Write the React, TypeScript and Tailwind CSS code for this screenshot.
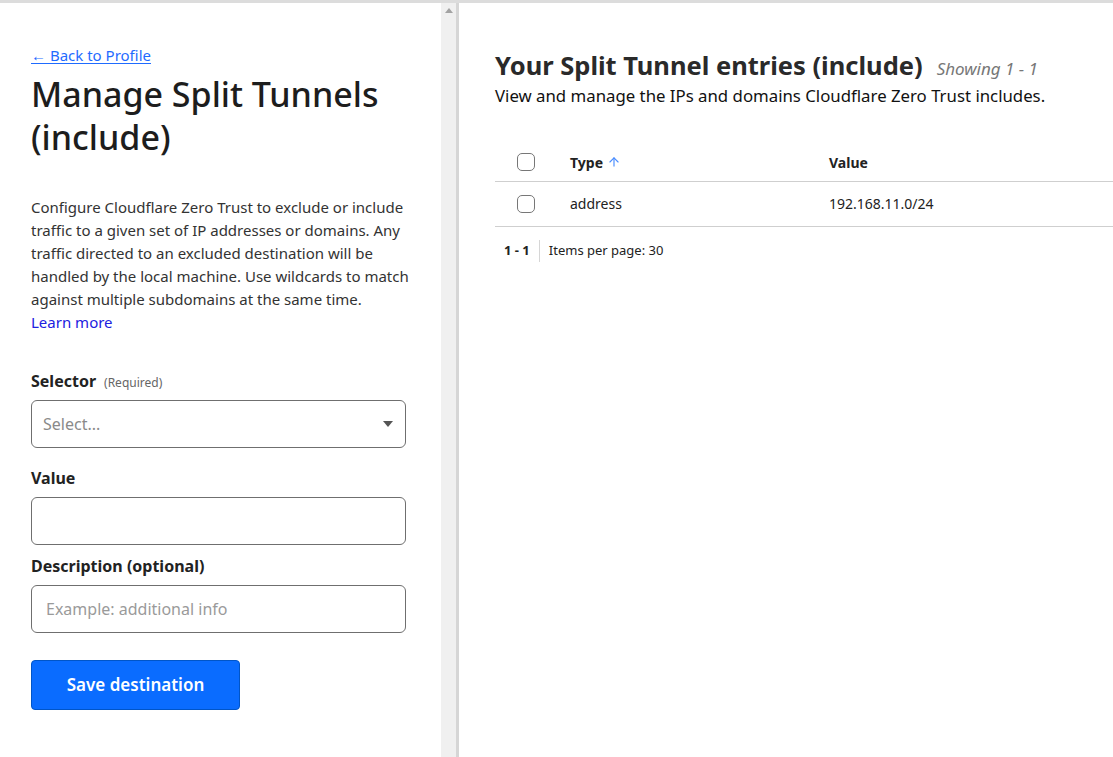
import { ArrowUp } from "lucide-react";

export default function App() {
  return (
    <div
      className="flex h-[757px] w-[1113px] overflow-hidden border-t-[3px] border-[#dcdcdc] bg-white text-[#222]"
      style={{ fontFamily: "'Noto Sans', 'Open Sans', sans-serif" }}
    >
      {/* LEFT PANEL */}
      <div className="w-[441px] shrink-0 pl-[31px] pr-[30px] pt-[40px]">
        <a href="#" className="text-[15px] text-[#1f6bff] underline underline-offset-2">
          ← Back to Profile
        </a>
        <h1 className="mt-[6px] text-[34px] font-medium leading-[43px] text-[#1d1d1d]">
          Manage Split Tunnels
          <br />
          (include)
        </h1>

        <p className="mt-[37px] text-[15px] leading-[23px] text-[#333]">
          Configure Cloudflare Zero Trust to exclude or include
          <br />
          traffic to a given set of IP addresses or domains. Any
          <br />
          traffic directed to an excluded destination will be
          <br />
          handled by the local machine. Use wildcards to match
          <br />
          against multiple subdomains at the same time.
          <br />
          <a href="#" className="text-[#2020e0]">Learn more</a>
        </p>

        {/* FORM */}
        <div className="mt-[35px] flex w-[375px] flex-col">
          <div className="flex h-[24px] items-baseline gap-[8px]">
            <span className="text-[16px] font-bold">Selector</span>
            <span className="text-[12px] text-[#666]">(Required)</span>
          </div>
          <div className="mt-[7px] flex h-[48px] items-center justify-between rounded-[6px] border border-[#6f6f6f] pl-[11px] pr-[12px]">
            <span className="text-[16px] text-[#8a8a8a]">Select...</span>
            <svg width="10" height="6" viewBox="0 0 10 6">
              <path d="M0 0 L10 0 L5 6 Z" fill="#555" />
            </svg>
          </div>

          <label className="mt-[18px] h-[24px] text-[16px] font-bold leading-[24px]">Value</label>
          <input className="mt-[7px] h-[48px] rounded-[6px] border border-[#6f6f6f] px-[14px] text-[16px] outline-none" />

          <label className="mt-[9px] h-[24px] text-[16px] font-bold leading-[24px]">
            Description (optional)
          </label>
          <input
            placeholder="Example: additional info"
            className="mt-[7px] h-[48px] rounded-[6px] border border-[#6f6f6f] px-[14px] text-[16px] outline-none placeholder:text-[#9a9a9a]"
          />

          <button className="mt-[27px] h-[50px] w-[209px] rounded-[4px] border border-[#0055c8] bg-[#0a6cff] text-[17px] font-semibold text-white">
            Save destination
          </button>
        </div>
      </div>

      {/* SCROLLBAR */}
      <div className="flex w-[15px] shrink-0 justify-center bg-[#f0f0f0] pt-[5px]">
        <svg width="8" height="5" viewBox="0 0 8 5">
          <path d="M0 5 L4 0 L8 5 Z" fill="#a3a3a3" />
        </svg>
      </div>
      <div className="w-[3px] shrink-0 bg-[#d6d6d6]" />

      {/* RIGHT PANEL */}
      <div className="flex-1 pl-[36px] pt-[44px]">
        <div className="flex items-baseline gap-[14px]">
          <h2 className="text-[25.5px] font-bold leading-[36px] text-[#2a2a2a]">
            Your Split Tunnel entries (include)
          </h2>
          <span className="text-[17px] italic text-[#777]">Showing 1 - 1</span>
        </div>
        <p className="mt-[2px] text-[16.8px] leading-[22px] text-[#111]">
          View and manage the IPs and domains Cloudflare Zero Trust includes.
        </p>

        <table className="mt-[37px] w-full text-[14px]">
          <thead>
            <tr className="h-[37px] border-b border-[#cfcfcf] text-left">
              <th className="w-[75px] pl-[22px]">
                <div className="h-[18px] w-[18px] rounded-[5px] border border-[#777]" />
              </th>
              <th className="w-[259px] font-bold">
                <span className="flex items-center gap-[4px]">
                  Type <ArrowUp size={14} className="text-[#4a8dff]" strokeWidth={2} />
                </span>
              </th>
              <th className="font-bold">Value</th>
            </tr>
          </thead>
          <tbody>
            <tr className="h-[45px] border-b border-[#cfcfcf]">
              <td className="pl-[22px]">
                <div className="h-[18px] w-[18px] rounded-[5px] border border-[#777]" />
              </td>
              <td>address</td>
              <td>192.168.11.0/24</td>
            </tr>
          </tbody>
        </table>

        <div className="mt-[13px] flex h-[22px] items-center text-[13px]">
          <span className="pl-[9px] pr-[9px] font-bold">1 - 1</span>
          <span className="h-full w-px bg-[#d6d6d6]" />
          <span className="pl-[9px]">Items per page: 30</span>
        </div>
      </div>
    </div>
  );
}
